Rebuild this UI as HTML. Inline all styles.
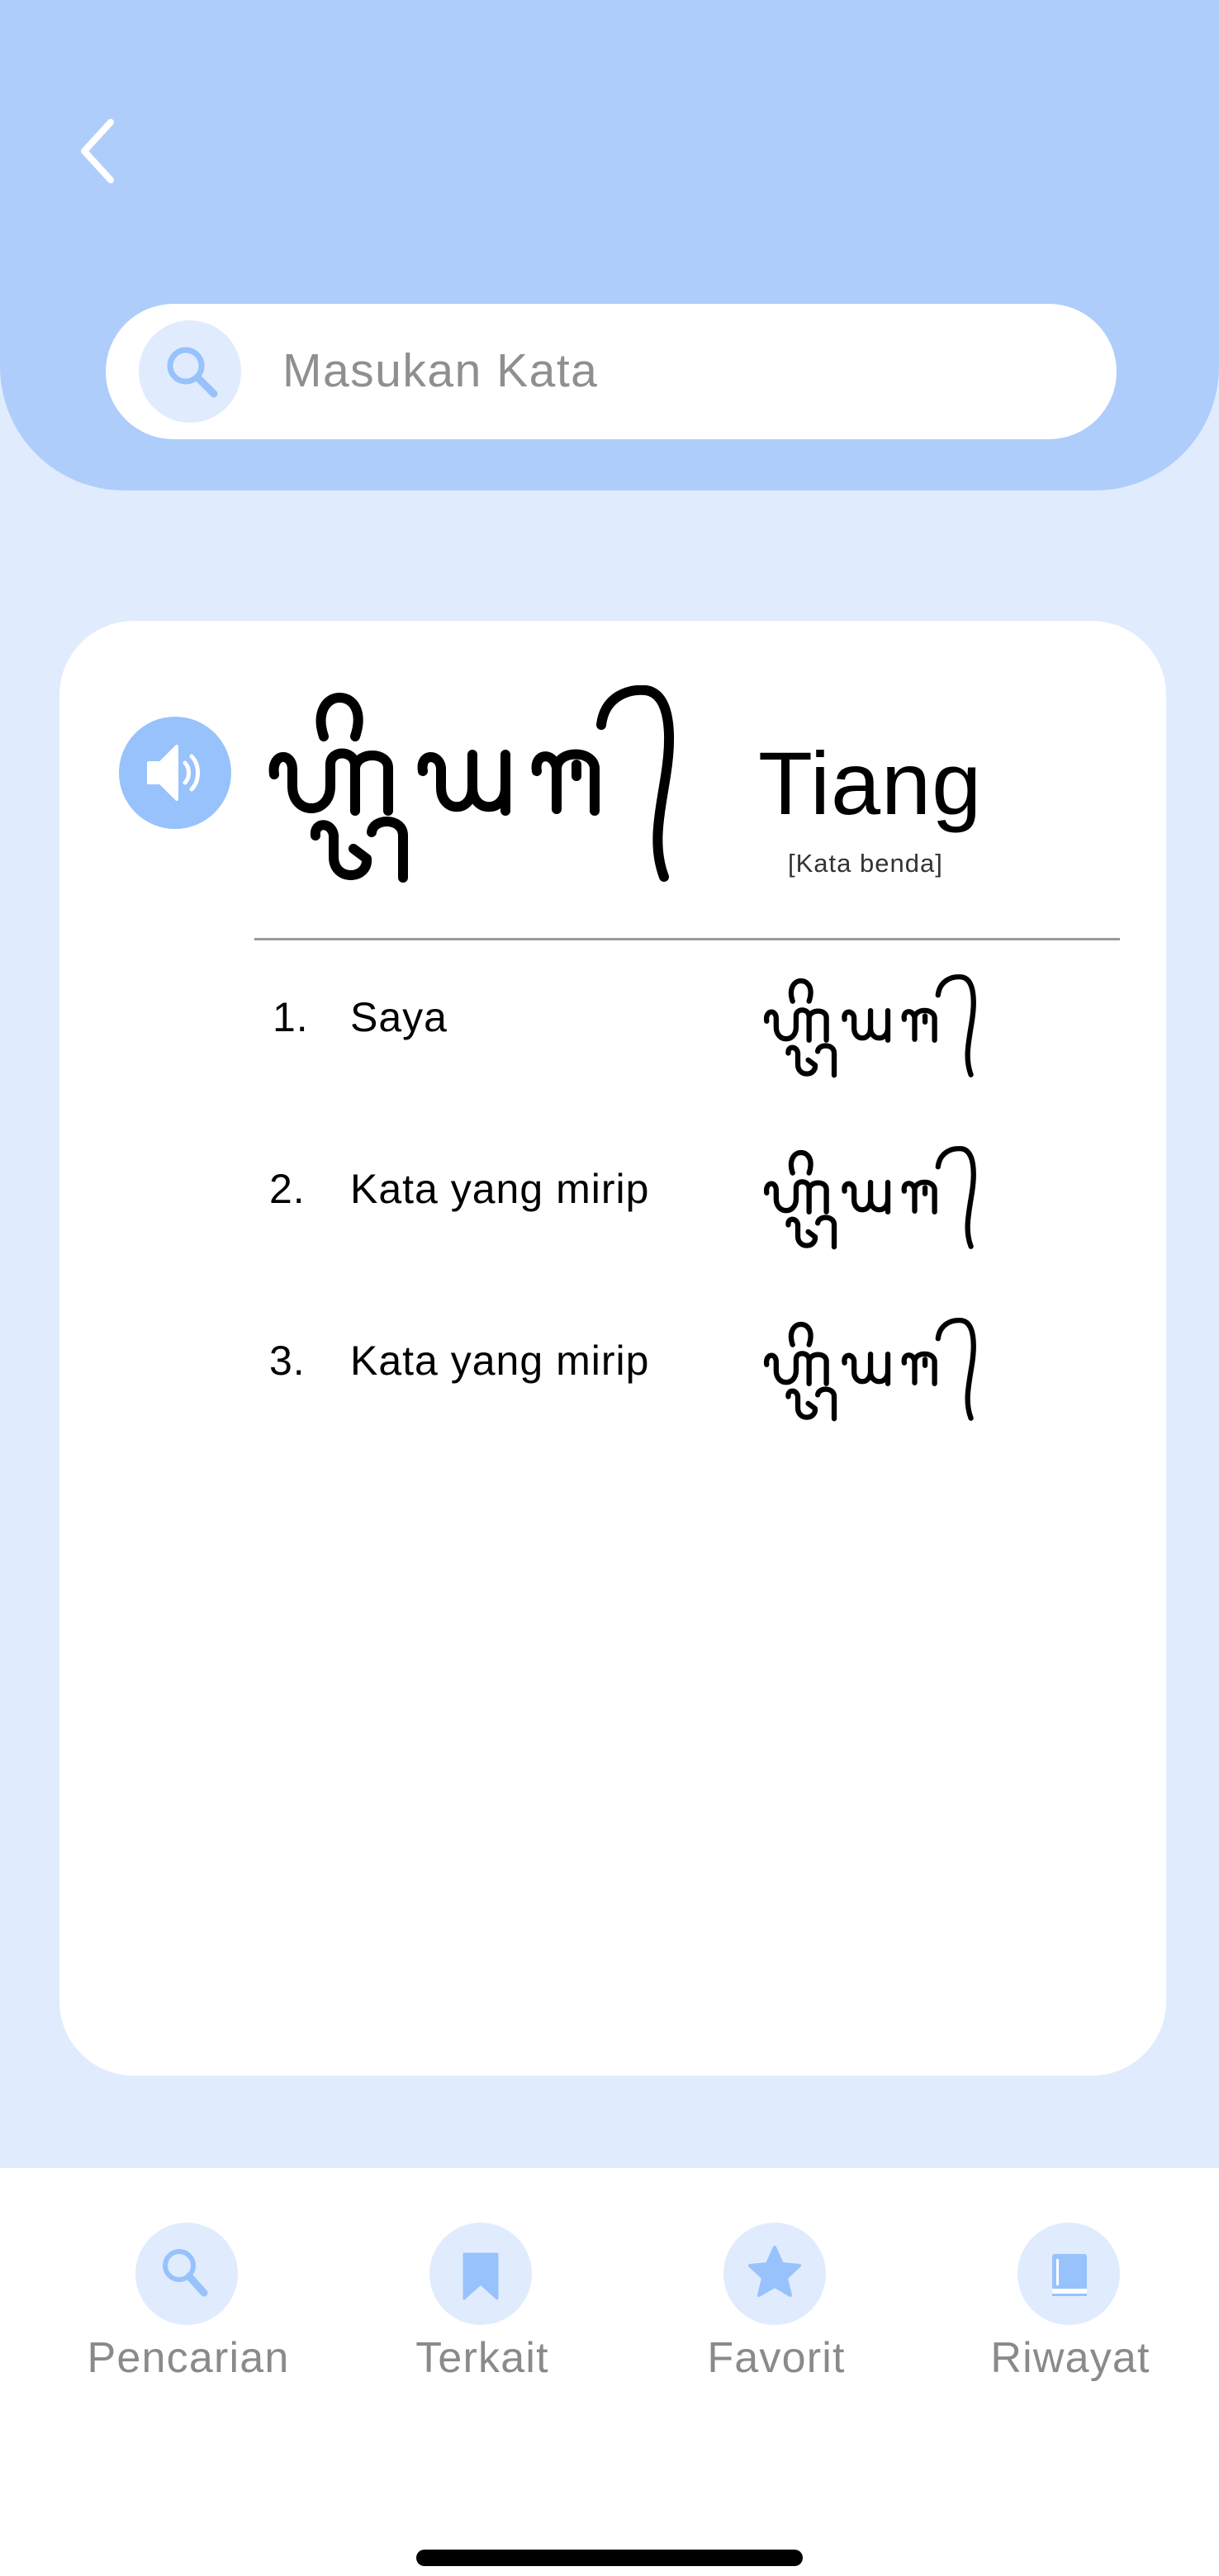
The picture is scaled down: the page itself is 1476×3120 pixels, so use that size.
<!DOCTYPE html>
<html><head><meta charset="utf-8"><style>
*{margin:0;padding:0;box-sizing:border-box}
body{width:1476px;height:3120px;background:#E0ECFD;font-family:"Liberation Sans",sans-serif;position:relative;overflow:hidden}
.abs{position:absolute}
.li{font-size:50px;line-height:60px;letter-spacing:1px}
.nav{font-size:52px;color:#8a8a8a;line-height:60px;text-align:center;letter-spacing:1.2px}
</style></head><body>
<svg width="0" height="0" style="position:absolute">
<defs>
<symbol id="jv" viewBox="0 0 500 240">
<g fill="none" stroke="#000" stroke-width="12" stroke-linecap="round" stroke-linejoin="round">
<path d="M72,62 C62,32 76,15 91,15 C108,15 120,32 110,62"/>
<path d="M12,108 C8,82 34,80 34,102 L34,122 C34,158 80,158 80,122 L80,96 C80,78 108,78 110,96 L110,152"/>
<path d="M110,100 C112,80 150,80 150,100 L150,152"/>
<path d="M192,104 C188,82 212,82 214,100 L214,124 C214,155 252,155 252,124 L252,84 M252,124 C252,155 292,155 292,124 L292,84 L292,152"/>
<path d="M330,104 C326,82 350,80 354,100 L354,150 M354,100 C356,78 398,78 400,100 L400,152 M378,96 L378,110"/>
<path d="M62,182 C60,165 82,165 84,182 L84,208 C84,238 126,236 124,210 L108,198 M130,178 C132,160 168,160 168,182 L168,233"/>
<path d="M408,48 C412,14 440,4 462,6 C492,10 494,60 486,110 C478,160 470,195 484,232"/>
</g>
</symbol>
</defs>
</svg>

<div class="abs" style="left:0;top:0;width:1476px;height:594px;background:#AECDFB;border-radius:0 0 150px 150px"></div>
<svg class="abs" style="left:90px;top:140px" width="60" height="90" viewBox="0 0 60 90"><path d="M44,8 L12,43 L44,78" fill="none" stroke="#fff" stroke-width="8" stroke-linecap="round" stroke-linejoin="round"/></svg>
<div class="abs" style="left:128px;top:368px;width:1224px;height:164px;background:#fff;border-radius:82px"></div>
<div class="abs" style="left:168px;top:388px;width:124px;height:124px;background:#E0ECFD;border-radius:50%"></div>
<svg class="abs" style="left:195px;top:413px" width="80" height="80" viewBox="0 0 80 80"><circle cx="30" cy="30" r="19" fill="none" stroke="#98C2FC" stroke-width="7"/><path d="M44,44 L64,64" stroke="#98C2FC" stroke-width="9" stroke-linecap="round"/></svg>
<div class="abs" style="left:342px;top:416px;font-size:57px;letter-spacing:1.5px;color:#8f8f8f;line-height:66px">Masukan Kata</div>

<div class="abs" style="left:72px;top:752px;width:1340px;height:1762px;background:#fff;border-radius:90px"></div>
<div class="abs" style="left:144px;top:868px;width:136px;height:136px;background:#98C2FC;border-radius:50%"></div>
<svg class="abs" style="left:144px;top:868px" width="136" height="136" viewBox="0 0 136 136"><path d="M36,56 L50,56 L70,36 L70,100 L50,80 L36,80 Z" fill="#fff" stroke="#fff" stroke-width="4" stroke-linejoin="round"/><path d="M80,56 C86,62 86,74 80,80" fill="none" stroke="#fff" stroke-width="5" stroke-linecap="round"/><path d="M88,48 C98,58 98,78 88,88" fill="none" stroke="#fff" stroke-width="5" stroke-linecap="round"/></svg>
<svg class="abs" style="left:320px;top:830px" width="500" height="240"><use href="#jv"/></svg>
<div class="abs" style="left:918px;top:886px;font-size:108px;letter-spacing:1px;color:#000;line-height:125px">Tiang</div>
<div class="abs" style="left:954px;top:1028px;font-size:31px;letter-spacing:1px;color:#333;line-height:36px">[Kata benda]</div>
<div class="abs" style="left:308px;top:1136px;width:1048px;height:3px;background:#999"></div>

<div class="abs li" style="left:330px;top:1202px">1.</div>
<div class="abs li" style="left:424px;top:1202px">Saya</div>
<svg class="abs" style="left:922px;top:1180px" width="262" height="126" viewBox="0 0 500 240"><use href="#jv"/></svg>
<div class="abs li" style="left:326px;top:1410px">2.</div>
<div class="abs li" style="left:424px;top:1410px">Kata yang mirip</div>
<svg class="abs" style="left:922px;top:1388px" width="262" height="126" viewBox="0 0 500 240"><use href="#jv"/></svg>
<div class="abs li" style="left:326px;top:1618px">3.</div>
<div class="abs li" style="left:424px;top:1618px">Kata yang mirip</div>
<svg class="abs" style="left:922px;top:1596px" width="262" height="126" viewBox="0 0 500 240"><use href="#jv"/></svg>

<div class="abs" style="left:0;top:2626px;width:1476px;height:494px;background:#fff"></div>
<div class="abs" style="left:164px;top:2692px;width:124px;height:124px;background:#E0ECFD;border-radius:50%"></div>
<div class="abs" style="left:520px;top:2692px;width:124px;height:124px;background:#E0ECFD;border-radius:50%"></div>
<div class="abs" style="left:876px;top:2692px;width:124px;height:124px;background:#E0ECFD;border-radius:50%"></div>
<div class="abs" style="left:1232px;top:2692px;width:124px;height:124px;background:#E0ECFD;border-radius:50%"></div>
<svg class="abs" style="left:164px;top:2692px" width="124" height="124" viewBox="0 0 124 124"><circle cx="53" cy="52" r="17" fill="none" stroke="#98C2FC" stroke-width="6"/><path d="M65,65 L83,85" stroke="#98C2FC" stroke-width="9" stroke-linecap="round"/></svg>
<svg class="abs" style="left:520px;top:2692px" width="124" height="124" viewBox="0 0 124 124"><path d="M42,38 L82,38 L82,92 L62,74 L42,92 Z" fill="#98C2FC" stroke="#98C2FC" stroke-width="3" stroke-linejoin="round"/></svg>
<svg class="abs" style="left:876px;top:2692px" width="124" height="124" viewBox="0 0 124 124"><path d="M62,30 L71,50 L92,52 L76,67 L81,88 L62,77 L43,88 L48,67 L32,52 L53,50 Z" fill="#98C2FC" stroke="#98C2FC" stroke-width="4" stroke-linejoin="round"/></svg>
<svg class="abs" style="left:1232px;top:2692px" width="124" height="124" viewBox="0 0 124 124"><rect x="42" y="38" width="42" height="50" rx="3" fill="#98C2FC"/><rect x="42" y="80" width="42" height="7" fill="#fff"/><rect x="42" y="86" width="42" height="3" fill="#98C2FC"/><rect x="47" y="44" width="3" height="32" fill="#fff"/></svg>
<div class="abs nav" style="left:0;top:2826px;width:456px">Pencarian</div>
<div class="abs nav" style="left:384px;top:2826px;width:400px">Terkait</div>
<div class="abs nav" style="left:740px;top:2826px;width:400px">Favorit</div>
<div class="abs nav" style="left:1096px;top:2826px;width:400px">Riwayat</div>
<div class="abs" style="left:504px;top:3088px;width:468px;height:20px;background:#000;border-radius:10px"></div>
</body></html>
